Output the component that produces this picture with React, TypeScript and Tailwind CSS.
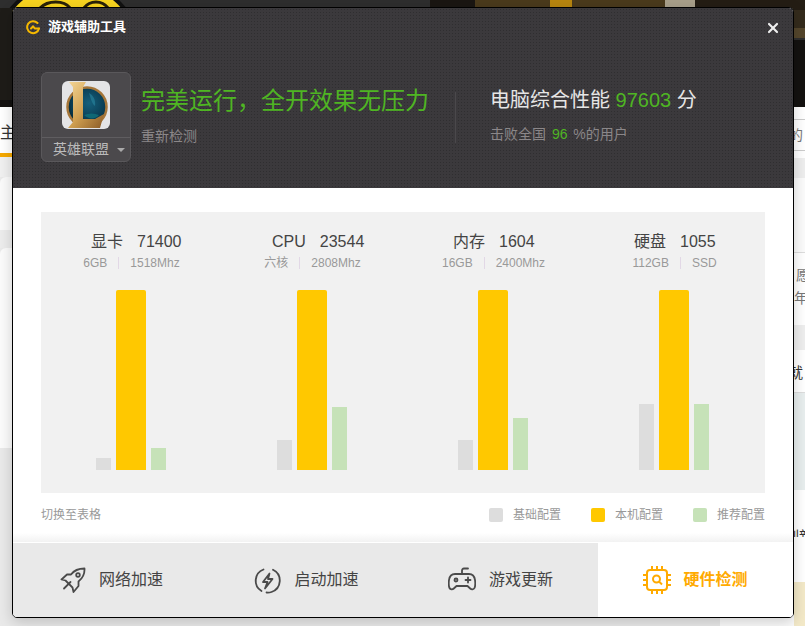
import React from "react";
import { X } from "lucide-react";

const stats = [
  { name: "显卡", score: "71400", left: "6GB", right: "1518Mhz", base: 12, rec: 22 },
  { name: "CPU", score: "23544", left: "六核", right: "2808Mhz", base: 30, rec: 63 },
  { name: "内存", score: "1604", left: "16GB", right: "2400Mhz", base: 30, rec: 52 },
  { name: "硬盘", score: "1055", left: "112GB", right: "SSD", base: 66, rec: 66 },
];

const legend = [
  { label: "基础配置", color: "bg-[#dddddd]" },
  { label: "本机配置", color: "bg-[#ffc800]" },
  { label: "推荐配置", color: "bg-[#c6e2b8]" },
];

const RocketIcon = () => (
  <svg width="26" height="26" viewBox="0 0 26 26" fill="none" stroke="#4a4a4a" strokeWidth="1.8" strokeLinejoin="round" strokeLinecap="round">
    <path d="M24.500 1.500C19 1.500 14 3.500 11 7.500H7L1.500 12.500 5.500 13.500 12.500 20.500 13.500 25 18.500 19V14.500C23 11 24.800 6.500 24.500 1.500z" />
    <path d="M4 21.500l6.500-6.500" />
    <circle cx="18" cy="8" r="1.800" />
  </svg>
);

const BoltIcon = () => (
  <svg width="27" height="27" viewBox="0 0 27 27" fill="none" stroke="#4a4a4a" strokeWidth="1.800" strokeLinejoin="round" strokeLinecap="round">
    <path d="M9.500 2.500A12 12 0 0 0 7.500 24" />
    <path d="M19 2.800A12 12 0 0 1 17.500 25a12 12 0 0 1-5 .5" />
    <path d="M15.500 6.500L9 15h4.500L11 21.500 18.500 12H14z" />
  </svg>
);

const PadIcon = () => (
  <svg width="28" height="26" viewBox="0 0 28 26" fill="none" stroke="#4a4a4a" strokeWidth="1.800" strokeLinejoin="round" strokeLinecap="round">
    <path d="M7 7h14c3.500 0 5.500 2.500 6 6 .4 3 .4 6-.5 8-.8 1.700-3 1.800-4.300.5L19.500 19h-11l-2.700 2.500C4.500 22.800 2.300 22.700 1.500 21c-.9-2-.9-5-.5-8 .5-3.500 2.500-6 6-6z" />
    <path d="M14 7V3.500c0-1.200.7-2 2-2h4" />
    <circle cx="8" cy="13" r="1.500" />
    <path d="M20 10.500v5M17.500 13h5" />
  </svg>
);

const ChipIcon = () => (
  <svg width="28" height="28" viewBox="0 0 28 28" fill="none" stroke="#ffaa00" strokeWidth="2">
    <rect x="4" y="4" width="20" height="20" rx="3" />
    <path d="M9 0v3M14 0v3M19 0v3M9 25v3M14 25v3M19 25v3M0 9h3M0 14h3M0 19h3M25 9h3M25 14h3M25 19h3" />
    <circle cx="13.500" cy="13" r="3.500" />
    <path d="M16 15.500l3 3" />
  </svg>
);

const LolLogo = () => (
  <div className="w-12 h-12 rounded-md bg-[#e4e4e6] overflow-hidden">
    <svg width="48" height="48" viewBox="0 0 48 48">
      <defs>
        <linearGradient id="gold" x1="0" y1="0" x2="1" y2="1">
          <stop offset="0" stopColor="#f3d596" />
          <stop offset="0.5" stopColor="#d2a253" />
          <stop offset="1" stopColor="#8a5a26" />
        </linearGradient>
        <radialGradient id="orb" cx="0.55" cy="0.4" r="0.65">
          <stop offset="0" stopColor="#15607c" />
          <stop offset="0.7" stopColor="#0a3a50" />
          <stop offset="1" stopColor="#052028" />
        </radialGradient>
      </defs>
      <circle cx="25" cy="26" r="19.500" fill="url(#orb)" stroke="#a5763a" strokeWidth="2.500" />
      <path d="M27 12c4 2 7 7 6 13-3-2-4-7-6-13z" fill="#2a87a0" opacity="0.6" />
      <path d="M22 34c5-2 10-2 15 0-3 4-10 5-15 0z" fill="#10707a" opacity="0.8" />
      <path d="M7 1h17l-3 5v32h12l9-5-4 14H6l5-6V6z" fill="url(#gold)" />
    </svg>
  </div>
);

const GLogo = () => (
  <svg width="14" height="15" viewBox="0 0 14 15" fill="none" stroke="#f5b800" strokeWidth="2" strokeLinecap="round">
    <path d="M11.500 3A6 6 0 1 0 13 8.500" />
    <path d="M5 8.500l2-2 2 2h4" />
  </svg>
);

const tabs = [
  { label: "网络加速", icon: <RocketIcon />, pad: "pl-[2px]" },
  { label: "启动加速", icon: <BoltIcon />, pad: "pl-[2px]" },
  { label: "游戏更新", icon: <PadIcon />, pad: "" },
];

export default function App() {
  return (
    <div className="relative w-[805px] h-[626px] overflow-hidden flex flex-col bg-[#e9e9e9] font-['Liberation_Sans','Noto_Sans_CJK_SC',sans-serif]">
      {/* page behind the dialog */}
      <div className="h-[107px] bg-[#141210] overflow-hidden">
        <svg width="805" height="107" viewBox="0 0 805 107">
          <rect width="805" height="40" fill="#2e2e2e" />
          <rect x="430" width="45" height="40" fill="#1a1612" />
          <rect x="475" width="190" height="40" fill="#4a3a1c" />
          <rect x="550" width="22" height="7" fill="#b8860f" />
          <rect x="665" width="30" height="8" fill="#a89f8a" />
          <rect x="695" width="110" height="12" fill="#241d14" />
          <rect x="794" y="10" width="11" height="18" fill="#342b1c" />
          <rect x="794" y="28" width="11" height="10" fill="#54462c" />
          <circle cx="68" cy="55" r="73" fill="#f8d41f" stroke="#111111" strokeWidth="4" />
          <rect x="0" y="8" width="12" height="92" fill="#1e1c18" />
          <path d="M40 8c8-8 24-8 30 0M84 8c6-8 18-8 24 0" fill="none" stroke="#2a2208" strokeWidth="3" />
        </svg>
      </div>
      <div className="flex-1 flex justify-between bg-[linear-gradient(90deg,#e9e9e9_720px,#fbfbfb_720px)]">
        <div className="w-3 flex flex-col bg-[#e9e9e9]">
          <div className="h-[46px] bg-white text-[16px] leading-[52px] text-[#333] overflow-hidden">主</div>
          <div className="h-1 bg-[#f5a800]" />
          <div className="h-5 bg-[#f0f0f0]" />
          <div className="h-[53px] bg-[#fafafa] rounded-tl-md" />
          <div className="h-[18px] bg-[#ececec]" />
          <div className="h-[200px] bg-[#fbfbfb] rounded-tl-md" />
        </div>
        <div className="w-[11px] flex flex-col bg-white overflow-hidden text-[14px] text-[#777] whitespace-nowrap">
          <div className="h-3" />
          <div className="h-[32px] border-y border-[#cccccc] leading-[30px] -ml-[5px]">的</div>
          <div className="h-[7px]" />
          <div className="h-5 bg-[#eeeeee]" />
          <div className="h-[75px] border-b border-[#dddddd] bg-[#fbfbfb]" />
          <div className="h-[29px] pt-[12px] leading-[20px] ml-[2px]">愿</div>
          <div className="h-[43px] pt-[6px] leading-[20px]">年</div>
          <div className="h-[25px] bg-[#eeeeee]" />
          <div className="h-[43px] border-b border-[#dddddd] leading-[46px] text-[15px] text-[#333] -ml-[6px]">就</div>
          <div className="h-[97px] bg-[#e8eeee]" />
          <div className="h-[47px] leading-[92px] text-[14px] text-[#333] -ml-[9px]">刷新</div>
          <div className="h-[45px] bg-white" />
          <div className="flex-1 bg-[#f3e9c8]" />
        </div>
      </div>

      {/* dialog */}
      <div className="absolute left-3 top-[7px] w-[782px] h-[611px] border border-black rounded-[5px] bg-white overflow-hidden flex flex-col shadow-[0_4px_14px_rgba(0,0,0,0.18)]">
        <div className="relative h-[180px] shrink-0 flex flex-col bg-[#3b393c] bg-[radial-gradient(#2f2e30_1px,transparent_1px)] bg-[length:3px_3px]">
          <div className="h-[64px] shrink-0 pl-[13px] pt-3 flex items-start gap-2">
            <GLogo />
            <span className="text-[13px] leading-[13px] font-bold text-white">游戏辅助工具</span>
          </div>
          <button className="absolute top-[12px] right-[12px] text-[#eeeeee]" aria-label="关闭">
            <X size={16} strokeWidth={3.2} />
          </button>
          <div className="flex pl-7">
            <div className="w-[90px] h-[90px] rounded-md border border-[#5a585b] bg-[#4b494c] flex flex-col">
              <div className="h-[65px] border-b border-[#5f5d60] pt-2 flex justify-center">
                <LolLogo />
              </div>
              <div className="flex-1 flex items-center pl-[11px] text-[14px] text-[#bbbbbb]">
                英雄联盟
                <span className="ml-2 w-0 h-0 border-x-[4px] border-x-transparent border-t-[4px] border-t-[#aaaaaa]" />
              </div>
            </div>
            <div className="ml-[10px] pt-[11px]">
              <div className="text-[24px] leading-[36px] text-[#4fb523]">完美运行，全开效果无压力</div>
              <div className="mt-[7px] text-[14px] leading-5 text-[#8b8789]">重新检测</div>
            </div>
            <div className="ml-[26px] mt-5 h-[51px] w-px bg-[#4a484b]" />
            <div className="ml-[34px] pt-[13px]">
              <div className="text-[20px] leading-[30px] text-[#e6e6e6]">
                电脑综合性能 <span className="text-[#4fb523]">97603</span> 分
              </div>
              <div className="mt-[9px] text-[14px] leading-5 text-[#8b8789]">
                击败全国 <span className="mx-[2px] text-[#4fb523]">96</span> %的用户
              </div>
            </div>
          </div>
        </div>

        <div className="flex-1 px-7 pt-6 relative">
          <div className="h-[281px] bg-[#f1f1f1] grid grid-cols-4">
            {stats.map((s) => (
              <div key={s.name} className="flex flex-col items-center">
                <div className="mt-5 w-full pl-[50px] flex gap-[14px] text-[16px] leading-5 text-[#444444]">
                  <span>{s.name}</span>
                  <span>{s.score}</span>
                </div>
                <div className="mt-[1px] flex items-center text-[12px] leading-5 text-[#999999]">
                  <span>{s.left}</span>
                  <span className="mx-[11px] w-px h-3 bg-[#e2d8e6]" />
                  <span>{s.right}</span>
                </div>
                <div className="mt-[17px] mr-px h-[180px] flex items-end gap-[5px]">
                  <div className="w-[15px] bg-[#dddddd]" style={{ height: s.base }} />
                  <div className="w-[30px] h-[180px] rounded-t-[2px] bg-[#ffc800]" />
                  <div className="w-[15px] bg-[#c6e2b8]" style={{ height: s.rec }} />
                </div>
              </div>
            ))}
          </div>
          <div className="mt-[13px] flex items-center justify-between text-[12px] leading-[18px] text-[#999999]">
            <span>切换至表格</span>
            <div className="flex gap-[30px]">
              {legend.map((l) => (
                <div key={l.label} className="flex items-center gap-[10px]">
                  <span className={`w-[14px] h-[14px] rounded-[2px] ${l.color}`} />
                  {l.label}
                </div>
              ))}
            </div>
          </div>
          <div className="absolute left-0 right-0 bottom-0 h-[9px] bg-gradient-to-b from-transparent to-[#f2f2f2]" />
        </div>

        <div className="h-[75px] shrink-0 border-t border-white grid grid-cols-4 bg-[#e9e9e9]">
          {tabs.map((t) => (
            <div key={t.label} className={`flex items-center justify-center gap-[13px] text-[16px] text-[#444444] ${t.pad}`}>
              {t.icon}
              <span>{t.label}</span>
            </div>
          ))}
          <div className="flex items-center justify-center gap-3 bg-white text-[16px] font-bold text-[#ffaa00]">
            <ChipIcon />
            <span>硬件检测</span>
          </div>
        </div>
      </div>
    </div>
  );
}
